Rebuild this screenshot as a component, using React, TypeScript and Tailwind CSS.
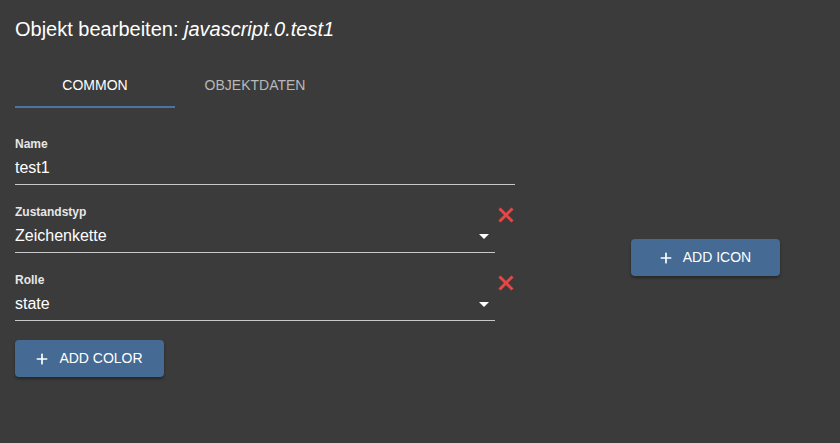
import { Plus } from "lucide-react";

function Field({ label, value, select, wide }: { label: string; value: string; select?: boolean; wide?: boolean }) {
  return (
    <div className="flex items-start">
      <div className={`${wide ? "w-[500px]" : "w-[480px]"} border-b border-[#c8c8c8] pb-[7px]`}>
        <div className="text-[12px] font-bold leading-[14px] text-[#e6e6e6]">{label}</div>
        <div className="mt-[7px] flex items-center justify-between pr-[6px]">
          <span className="text-[16px] leading-[19px] text-white">{value}</span>
          {select && (
            <svg width="10" height="5" viewBox="0 0 10 5" className="mt-[2px]">
              <path d="M0 0h10L5 5z" fill="#fff" />
            </svg>
          )}
        </div>
      </div>
      {select && (
        <svg width="16" height="16" viewBox="0 0 16 16" className="ml-[3px] mt-[2px]">
          <path d="M1.5 1.5l13 13M14.5 1.5l-13 13" stroke="#e84545" strokeWidth="3" />
        </svg>
      )}
    </div>
  );
}

function AddButton({ text }: { text: string }) {
  return (
    <button className="flex h-[37px] w-[149px] items-center justify-center gap-[9px] rounded-[4px] bg-[#456a94] pr-[2px] text-[14px] font-medium text-white shadow-[0_2px_3px_rgba(0,0,0,0.35)]">
      <Plus size={16} strokeWidth={2.5} />
      <span>{text}</span>
    </button>
  );
}

export default function App() {
  return (
    <div className="h-[443px] w-[840px] bg-[#3b3b3b] px-[15px] font-['Liberation_Sans',Arial,sans-serif]">
      <h1 className="pt-[17px] text-[20px] leading-[24px] text-white">
        Objekt bearbeiten: <i>javascript.0.test1</i>
      </h1>
      <div className="mt-[26px] flex">
        <div className="flex h-[41px] w-[160px] flex-col items-center justify-between">
          <span className="mt-[8px] text-[14px] font-medium text-white">COMMON</span>
          <div className="h-[2px] w-full bg-[#4b73a3]" />
        </div>
        <div className="flex h-[41px] w-[160px] items-start justify-center">
          <span className="mt-[8px] text-[14px] font-medium text-[#b8b8b8]">OBJEKTDATEN</span>
        </div>
      </div>
      <div className="flex">
        <div className="flex flex-col">
          <div className="mt-[29px]">
            <Field label="Name" value="test1" wide />
          </div>
          <div className="mt-[20px]">
            <Field label="Zustandstyp" value="Zeichenkette" select />
          </div>
          <div className="mt-[20px]">
            <Field label="Rolle" value="state" select />
          </div>
          <div className="mt-[19px]">
            <AddButton text="ADD COLOR" />
          </div>
        </div>
        <div className="ml-[116px] mt-[131px]">
          <AddButton text="ADD ICON" />
        </div>
      </div>
    </div>
  );
}
